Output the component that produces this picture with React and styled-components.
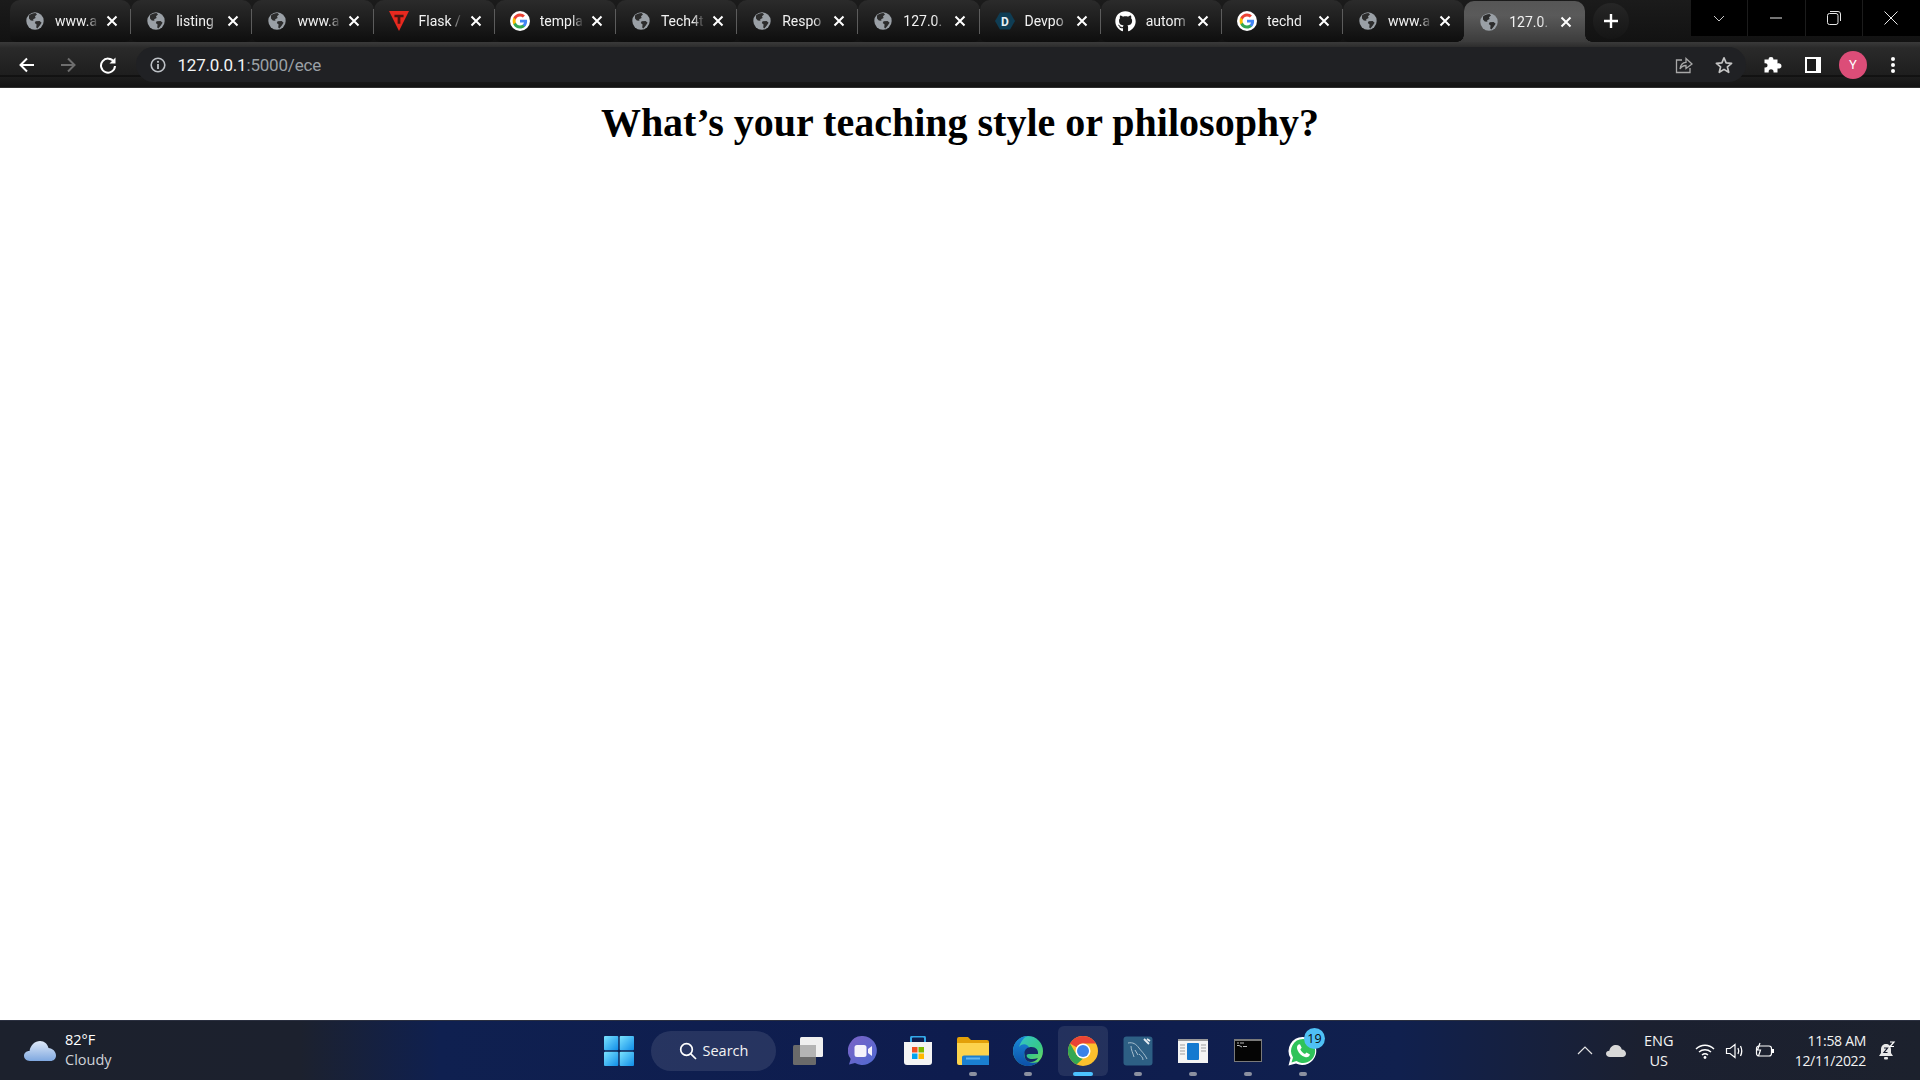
import React from 'react';
import styled, { createGlobalStyle } from 'styled-components';
import { FaGithub } from 'react-icons/fa';

const Global = createGlobalStyle`
  html, body { margin: 0; padding: 0; height: 100%; background: #fff; overflow: hidden; }
  #root { height: 100%; }
`;
const Screen = styled.div`
  width: 1920px; height: 1080px; display: flex; flex-direction: column;
  font-family: Roboto, "Open Sans", sans-serif;
`;

/* ---------- tab strip ---------- */
const Strip = styled.div`
  height: 42px; flex: none; display: flex; align-items: flex-start;
  padding-left: 10px;
  background: linear-gradient(#1b1b1b, #121212);
`;
const Tabs = styled.div`display: flex; height: 42px;`;
const Tab = styled.div`
  position: relative; box-sizing: border-box; width: ${p => p.$active ? 121 : 121.2}px;
  height: ${p => p.$active ? 41 : 42}px; margin-top: ${p => p.$active ? 1 : 0}px;
  display: flex; align-items: center; padding-left: 15px;
  border-radius: ${p => p.$active ? '10px 10px 0 0' : '10px 10px 6px 6px'};
  background: ${p => p.$active ? 'linear-gradient(#565656 0%, #5a5a5a 35%, #3c3c3c 100%)' : 'linear-gradient(#2b2b2b 0%, #1d1d1d 50%, #0e0e0e 100%)'};
  &::before {
    content: ''; display: ${p => p.$active ? 'block' : 'none'};
    position: absolute; left: -7px; bottom: 0; width: 7px; height: 7px;
    background: radial-gradient(circle at 0 0, transparent 6.5px, #3c3c3c 7px);
  }
  &::after {
    content: ''; display: ${p => p.$sep || p.$active ? 'block' : 'none'};
    position: absolute;
    ${p => p.$active
      ? 'right: -7px; bottom: 0; width: 7px; height: 7px; background: radial-gradient(circle at 100% 0, transparent 6.5px, #3c3c3c 7px);'
      : 'right: 0; top: 9px; width: 1px; height: 25px; background: #5c5c5c;'}
  }
`;
const Fav = styled.span`
  flex: none; width: 20px; height: 20px; display: flex; align-items: center; justify-content: center;
`;
const Title = styled.span`
  width: 44px; margin-left: 10px; flex: none; overflow: hidden; white-space: nowrap;
  font-size: 14px; color: #f1f1f1; line-height: 20px;
  -webkit-mask-image: linear-gradient(90deg, #000 72%, transparent 100%);
  mask-image: linear-gradient(90deg, #000 72%, transparent 100%);
`;
const Close = styled.span`
  flex: none; margin-left: 3px; width: 20px; height: 20px; display: flex; align-items: center; justify-content: center;
`;
const NewTab = styled.div`
  flex: none; margin: 3px 0 0 8px; width: 36px; height: 36px; border-radius: 50%;
  background: linear-gradient(#262626, #151515); display: flex; align-items: center; justify-content: center;
`;
const WindowControls = styled.div`
  margin-left: auto; display: flex; height: 36px; width: 229px; background: #000; flex: none;
`;
const WinBtn = styled.div`
  flex: 1; display: flex; align-items: center; justify-content: center;
  border-right: 1px solid ${p => p.$last ? 'transparent' : '#1c1c1c'};
`;

/* ---------- toolbar ---------- */
const Toolbar = styled.div`
  height: 46px; flex: none; display: flex; align-items: center; box-sizing: border-box;
  padding: 5px 7px 6px 7px;
  background: linear-gradient(#3a3a3a 0, #2a2a2a 6px, #1e1e1e 33px, #060606 34px, #1d1d1d 35px, #121212 46px);
  box-shadow: inset 0 -1px 0 #2e2e2e;
`;
const NavBtn = styled.div`
  width: ${p => p.$w || 40.5}px; height: 35px; flex: none; display: flex; align-items: center; justify-content: center;
`;
const Omnibox = styled.div`
  flex: 1; height: 35px; margin: 0 7px; display: flex; align-items: center; padding: 0 13px 0 14px;
  background: #202124; border-radius: 18px;
`;
const Url = styled.div`
  margin-left: 12px; font-size: 17px; color: #f1f3f4; letter-spacing: -0.2px;
  span { color: #9aa0a6; }
`;
const OmniRight = styled.div`margin-left: auto; display: flex; align-items: center; gap: 22px;`;
const Avatar = styled.div`
  width: 28px; height: 28px; border-radius: 50%; background: #dc4d78; color: #fff;
  display: flex; align-items: center; justify-content: center; font-size: 13px;
`;

/* ---------- page ---------- */
const Page = styled.main`flex: 1; background: #fff; min-height: 0;`;
const Heading = styled.h1`
  margin: 12px 0 0; text-align: center; color: #000;
  font: bold 40px/46px "Liberation Serif", "Times New Roman", serif;
`;

/* ---------- taskbar ---------- */
const Taskbar = styled.footer`
  height: 60px; flex: none; box-sizing: border-box; display: grid; grid-template-columns: 1fr auto 1fr; align-items: center;
  border-top: 1px solid #2b3040;
  background: linear-gradient(90deg, #1c212d 0, #1c212e 300px, #0f2050 440px, #0e1c4e 960px, #10204e 1400px, #1b2030 1640px, #1c212d 100%);
  font-family: "Open Sans", "Noto Sans", sans-serif;
`;
const Weather = styled.div`display: flex; align-items: center; padding-left: 24px; gap: 9px;`;
const TwoLine = styled.div`
  font-size: 14.5px; line-height: 20px; color: #fff; margin-top: -2px;
  small { display: block; font-size: 14.5px; color: #cfd2d8; }
`;
const Center = styled.div`display: flex; align-items: center; margin-left: 2px;`;
const Slot = styled.div`
  position: relative; width: 55px; height: 50px; display: flex; align-items: center; justify-content: center; flex: none;
`;
const Highlight = styled.div`
  position: absolute; left: 2.5px; right: 2.5px; top: 0; bottom: 0; border-radius: 6px;
  background: rgba(255,255,255,.09);
`;
const Dot = styled.i`
  position: absolute; left: 50%; bottom: 0; transform: translateX(-50%);
  width: ${p => p.$active ? 20 : 8}px; height: 4px; border-radius: 2px;
  background: ${p => p.$active ? '#4cc2ff' : '#8b90a0'};
`;
const IconWrap = styled.span`position: relative; display: flex;`;
const Badge = styled.span`
  position: absolute; top: -8px; right: -7px; width: 21px; height: 21px; border-radius: 50%;
  background: #4fc1f5; color: #0b0b0b; font-size: 12.5px; line-height: 21px; text-align: center;
`;
const SearchPill = styled.div`
  flex: none; width: 125px; height: 40px; margin: 0 4.5px; border-radius: 20px; box-sizing: border-box;
  background: rgba(255,255,255,.1); display: flex; align-items: center; justify-content: center; gap: 6px;
  color: #f3f3f3; font-size: 14.5px;
`;
const Tray = styled.div`display: flex; align-items: center; justify-content: flex-end; color: #fff; padding-right: 24px;`;
const TrayIcon = styled.span`display: flex; flex: none; margin-left: ${p => p.$ml || 0}px;`;
const Lang = styled.div`
  margin-left: 15px; width: 36px; text-align: center; font-size: 14.5px; line-height: 20px; color: #f3f3f3;
`;
const Clock = styled.div`
  margin-left: 20px; text-align: right; font-size: 14px; letter-spacing: -0.3px; line-height: 20px; color: #f3f3f3; white-space: nowrap;
`;

/* ---------- drawings ---------- */
const Globe = () => (
  <svg width="18" height="18" viewBox="0 0 18 18">
    <circle cx="9" cy="9" r="8.7" fill="#9aa0a6" />
    <path d="M3 3.6 C4.5 2 7 1 9.5 1 L11 2.6 L9 4.2 L9.6 6 L7.2 7.2 L7.4 8.8 L4.8 8.6 L3 6.6 Z" fill="#2c2c2c" />
    <path d="M9.6 9.2 L13.6 9 L15.6 10.8 L13.8 13.6 L11.4 16.4 L10.2 15.6 L10.6 12.4 L8.8 11 Z" fill="#2c2c2c" />
  </svg>
);
const GoogleG = () => (
  <svg width="20" height="20" viewBox="0 0 48 48">
    <circle cx="24" cy="24" r="24" fill="#fff" />
    <path fill="#4285F4" d="M41 24.5c0-1.300-.1-2.500-.3-3.700H24v7h9.600c-.4 2.200-1.700 4.100-3.500 5.300v4.500h5.700C39.100 34.500 41 30 41 24.500z" />
    <path fill="#34A853" d="M24 42c4.800 0 8.800-1.600 11.800-4.300l-5.700-4.500c-1.600 1.100-3.600 1.700-6.100 1.700-4.600 0-8.500-3.100-9.900-7.300H8.200v4.600C11.100 37.900 17 42 24 42z" />
    <path fill="#FBBC05" d="M14.100 27.600c-.4-1.100-.6-2.300-.6-3.600s.2-2.500.6-3.600v-4.600H8.200C7 18.200 6.300 21 6.300 24s.7 5.800 1.900 8.200l5.900-4.600z" />
    <path fill="#EA4335" d="M24 13.100c2.600 0 5 .9 6.800 2.700l5.100-5.100C32.800 7.800 28.800 6 24 6 17 6 11.100 10.100 8.200 15.800l5.900 4.600c1.400-4.200 5.300-7.300 9.900-7.300z" />
  </svg>
);
const FlaskLogo = () => (
  <svg width="22" height="22" viewBox="0 0 22 22">
    <path d="M0 0 H22 L11 22 Z" fill="#e7291f" />
    <path d="M6 4 H16 V7 H12.500 V14 H9.500 V7 H6 Z" fill="#4a1510" />
  </svg>
);
const DevLogo = () => (
  <svg width="20" height="20" viewBox="0 0 20 20">
    <path d="M5 1.500 H15 L20 10 L15 18.500 H5 L0 10 Z" fill="#0f3d54" />
    <text x="10" y="14.500" textAnchor="middle" fontSize="12" fontWeight="700" fontFamily="Roboto, sans-serif" fill="#e8f0f4">D</text>
  </svg>
);
const X = () => (
  <svg width="12" height="12" viewBox="0 0 12 12"><path d="M1.500 1.500 L10.500 10.500 M10.500 1.500 L1.500 10.500" stroke="#fff" strokeWidth="2" /></svg>
);
const favs = {
  globe: <Globe />, g: <GoogleG />, flask: <FlaskLogo />, dev: <DevLogo />,
  gh: <span style={{ display: 'flex', color: '#fff' }}><FaGithub size={21} /></span>,
};
const tabs = [
  ['globe', 'www.a'], ['globe', 'listing'], ['globe', 'www.a'], ['flask', 'Flask /'], ['g', 'templa'],
  ['globe', 'Tech4t'], ['globe', 'Respo'], ['globe', '127.0.'], ['dev', 'Devpo'], ['gh', 'autom'],
  ['g', 'techd'], ['globe', 'www.a'], ['globe', '127.0.'],
];

const Sv = ({ s = 20, children, v }) => <svg width={s} height={s} viewBox={v || `0 0 ${s} ${s}`} fill="none">{children}</svg>;

const Back = ({ c = '#fff' }) => <Sv s={18}><path d="M16 9 H2.500 M9 2.500 L2.500 9 L9 15.500" stroke={c} strokeWidth="2" /></Sv>;
const Fwd = () => <Sv s={18}><path d="M2 9 H15.500 M9 2.500 L15.500 9 L9 15.500" stroke="#6e6e6e" strokeWidth="2" /></Sv>;
const Reload = () => <Sv s={18}><path d="M15 6 A7 7 0 1 0 16 10" stroke="#fff" strokeWidth="2" /><path d="M16.500 1.500 V7.500 H10.500 Z" fill="#fff" /></Sv>;
const Info = () => <Sv s={16}><circle cx="8" cy="8" r="6.800" stroke="#bdc1c6" strokeWidth="1.600" /><path d="M8 7 V12" stroke="#bdc1c6" strokeWidth="1.800" /><circle cx="8" cy="4.800" r="1.100" fill="#bdc1c6" /></Sv>;
const Share = () => <Sv s={18}><path d="M7 4 H1.500 V16.500 H15 V12" stroke="#a8a8a8" strokeWidth="1.300" /><path d="M5 13 C5.500 8.500 8 6.500 11 6.300 V2.500 L17 8 L11 12.500 V9.500 C8.500 9.500 6.500 10.500 5 13 Z" stroke="#a8a8a8" strokeWidth="1.300" /></Sv>;
const Star = () => <Sv s={18}><path d="M9 1.800 L11.100 6.900 L16.600 7.300 L12.400 10.900 L13.700 16.300 L9 13.400 L4.300 16.300 L5.600 10.900 L1.400 7.300 L6.900 6.900 Z" stroke="#c4c4c4" strokeWidth="1.700" strokeLinejoin="round" /></Sv>;
const Puzzle = () => <Sv s={18}><path d="M7 1 C9 1 9.500 2 9.300 3.500 H13.500 V7.500 C15.500 7 17.500 7.800 17.500 10 C17.500 12 15.500 12.800 13.500 12.500 V16.500 H9.500 C9.800 14.500 9 13.300 7 13.300 C5 13.300 4.500 14.800 4.700 16.500 H.5 V11.500 C2.500 11.800 3.500 11 3.500 9.300 C3.500 7.800 2.500 7 .5 7.300 V3.500 H4.700 C4.500 2 5 1 7 1 Z" fill="#fff" /></Sv>;
const SidePanel = () => <Sv s={18}><rect x="1" y="1" width="16" height="16" fill="#fff" /><rect x="3" y="3" width="9" height="12" fill="#1c1c1c" /></Sv>;
const Dots = () => <Sv s={18}><circle cx="9" cy="3" r="2" fill="#fff" /><circle cx="9" cy="9" r="2" fill="#fff" /><circle cx="9" cy="15" r="2" fill="#fff" /></Sv>;

const Cloud = () => (
  <svg width="32" height="22" viewBox="0 0 32 22">
    <defs><linearGradient id="cl" x1="0" y1="0" x2="0" y2="1"><stop offset="0" stopColor="#dfe9f8" /><stop offset="1" stopColor="#7fa8e0" /></linearGradient></defs>
    <path d="M6 21 C2 21 0 18.500 0 15.800 C0 13 2.500 10.800 5.500 11 C6.500 5 11 1 16 1 C20.500 1 23.500 4 24.500 8 C28.500 8.300 32 11.500 32 15.500 C32 18.800 29.500 21 26.500 21 Z" fill="url(#cl)" />
  </svg>
);
const WinLogo = () => (
  <svg width="30" height="30" viewBox="0 0 30 30">
    <defs><linearGradient id="wl" x1="0" y1="0" x2="1" y2="1"><stop offset="0" stopColor="#7be3ff" /><stop offset="1" stopColor="#0f8de8" /></linearGradient></defs>
    <rect width="14.300" height="14.300" rx="1" fill="url(#wl)" /><rect x="15.700" width="14.300" height="14.300" rx="1" fill="url(#wl)" />
    <rect y="15.700" width="14.300" height="14.300" rx="1" fill="url(#wl)" /><rect x="15.700" y="15.700" width="14.300" height="14.300" rx="1" fill="url(#wl)" />
  </svg>
);
const TaskView = () => (
  <svg width="30" height="28" viewBox="0 0 30 28">
    <rect x="0" y="8" width="23" height="20" rx="1.500" fill="#6a6a6a" />
    <rect x="7" y="0" width="23" height="20" rx="1.500" fill="#f0f0f0" />
    <rect x="7" y="8" width="16" height="12" fill="#b4b4b4" />
  </svg>
);
const Chat = () => (
  <svg width="30" height="30" viewBox="0 0 30 30">
    <defs><linearGradient id="ch" x1="0" y1="0" x2="1" y2="1"><stop offset="0" stopColor="#7b62c6" /><stop offset="1" stopColor="#4f6ad2" /></linearGradient></defs>
    <path d="M15 0 A14.500 14.500 0 1 1 7 27 L1 28.500 L2.700 23 A14.500 14.500 0 0 1 15 0 Z" fill="url(#ch)" />
    <rect x="6.500" y="9" width="12" height="12" rx="2.500" fill="#f4f2fb" /><path d="M20 13 L24 10 V20 L20 17 Z" fill="#f4f2fb" />
  </svg>
);
const Store = () => (
  <svg width="30" height="30" viewBox="0 0 30 30">
    <path d="M8 6 V2 Q8 .5 10 .5 H20 Q22 .5 22 2 V6" stroke="#33a8e8" strokeWidth="2" fill="none" />
    <path d="M1 6 H29 V26 Q29 29 26 29 H4 Q1 29 1 26 Z" fill="#f4f4f4" />
    <rect x="9" y="11" width="5.500" height="5.500" fill="#f25022" /><rect x="15.500" y="11" width="5.500" height="5.500" fill="#7fba00" />
    <rect x="9" y="17.500" width="5.500" height="5.500" fill="#00a4ef" /><rect x="15.500" y="17.500" width="5.500" height="5.500" fill="#ffb900" />
  </svg>
);
const Folder = () => (
  <svg width="32" height="28" viewBox="0 0 32 28">
    <path d="M0 2 Q0 0 2 0 H11 L14 3 H30 Q32 3 32 5 V12 H0 Z" fill="#e3a008" />
    <path d="M0 6 H32 V26 Q32 28 30 28 H2 Q0 28 0 26 Z" fill="#fcd34d" />
    <path d="M5 20 Q5 18.500 7 18.500 H32 V28 H5 Z" fill="#1a7fd0" /><rect x="9" y="20.500" width="14" height="2" fill="#62b6f0" />
  </svg>
);
const Edge = () => (
  <svg width="30" height="30" viewBox="0 0 30 30">
    <defs>
      <linearGradient id="e1" x1="0" y1="0" x2="1" y2="1"><stop offset="0" stopColor="#36c4d8" /><stop offset=".6" stopColor="#36c88a" /><stop offset="1" stopColor="#7ee052" /></linearGradient>
      <linearGradient id="e2" x1="0" y1="0" x2="0" y2="1"><stop offset="0" stopColor="#1a8ad8" /><stop offset="1" stopColor="#0c4fa8" /></linearGradient>
    </defs>
    <circle cx="15" cy="15" r="15" fill="url(#e1)" />
    <path d="M15 0 C7 0 0 6.500 0 15 C0 23 6.500 30 15 30 C19 30 22.500 28.500 25 26 C20 28 13 26 11.500 21 C10.500 17.500 13 14.500 17 13 C14 6 8 8 6 11 C8 5 11 1 15 0 Z" fill="url(#e2)" />
    <path d="M11.500 17 C11.500 13 15 11 18.500 11 C23 11 25.500 14 25 18 L16 18 C14 18 13 19 14 21 C15 23 20 24 25 22 C22 27 14 27.500 12 22 C11.700 21 11.500 19 11.500 17 Z" fill="#142a6a" />
  </svg>
);
const Chrome = () => (
  <svg width="30" height="30" viewBox="0 0 30 30">
    <circle cx="15" cy="15" r="15" fill="#fbc02d" />
    <path d="M15 0 A15 15 0 0 1 28 7.500 H15 A7.500 7.500 0 0 0 8.500 11.200 L2 7.500 A15 15 0 0 1 15 0 Z" fill="#ea4335" />
    <path d="M2 7.500 L8.500 18.800 A7.500 7.500 0 0 0 15 22.500 L8.500 28.500 A15 15 0 0 1 2 7.500 Z" fill="#34a853" />
    <circle cx="15" cy="15" r="7.500" fill="#fff" /><circle cx="15" cy="15" r="6" fill="#3b82e8" />
  </svg>
);
const Mysql = () => (
  <svg width="30" height="30" viewBox="0 0 30 30">
    <rect width="29" height="29" x=".5" y=".5" rx="3" fill="#2d5f84" />
    <path d="M5 7 C10 6 13 8 16 12 C18 15 21 17 24 23 M8 10 C8 14 10 17 11 21 M12 14 L15 19 M16 18 C18 20 20 21 20 24" stroke="#b4c8d6" strokeWidth=".9" fill="none" />
    <path d="M21 3 L26 8 M24 3 L27 5" stroke="#e6edf2" strokeWidth="1.800" />
  </svg>
);
const AppWindow = () => (
  <svg width="30" height="24" viewBox="0 0 30 24">
    <rect width="30" height="24" fill="#f4f4f4" /><rect y="0" width="30" height="2" fill="#9a9a9a" />
    <rect x="9" y="4" width="12" height="17" rx="1" fill="#1479d0" />
    <path d="M2 6 H7 M2 9 H7 M2 12 H7 M2 15 H7 M23 6 H28 M23 9 H28 M23 12 H28" stroke="#9f9f9f" strokeWidth="1" />
  </svg>
);
const Cmd = () => (
  <svg width="28" height="23" viewBox="0 0 28 23">
    <rect width="28" height="23" fill="#7a7a7a" /><rect x="1" y="2" width="26" height="20" fill="#050505" />
    <path d="M3 4 H5 M6 4 H10 M3 6.500 H5 L8 8 M9 7.500 H13" stroke="#cfcfcf" strokeWidth=".9" />
  </svg>
);
const Whats = () => (
  <svg width="30" height="30" viewBox="0 0 30 30">
    <path d="M15 1 A14 14 0 1 1 8 27.500 L.5 29.500 L2.500 22 A14 14 0 0 1 15 1 Z" fill="#fff" />
    <path d="M15 3 A12 12 0 1 1 8.500 25 L3.500 26.500 L5 21.500 A12 12 0 0 1 15 3 Z" fill="#2fc35a" />
    <path d="M10.500 8.500 C9 9.500 8.500 11.500 9.500 14 C11 17.500 13.500 20 17 21 C19.500 21.800 21.500 20.500 22 18.500 L18.500 16.500 L17 18 C15 17.300 13 15.300 12.300 13.300 L13.700 11.800 L12 8.300 Z" fill="#fff" />
  </svg>
);

export default function App() {
  return (
    <Screen>
      <Global />
      <Strip>
        <Tabs>
          {tabs.map(([f, t], i) => (
            <Tab key={i} $active={i === 12} $sep={i < 11}>
              <Fav>{favs[f]}</Fav>
              <Title>{t}</Title>
              <Close><X /></Close>
            </Tab>
          ))}
        </Tabs>
        <NewTab><Sv s={16}><path d="M8 1 V15 M1 8 H15" stroke="#fff" strokeWidth="2.400" /></Sv></NewTab>
        <WindowControls>
          <WinBtn><Sv s={14}><path d="M2 5 L7 10 L12 5" stroke="#c8c8c8" strokeWidth="1" /></Sv></WinBtn>
          <WinBtn><Sv s={14}><path d="M1 7 H13" stroke="#e8e8e8" strokeWidth="1" /></Sv></WinBtn>
          <WinBtn><Sv s={14}><rect x=".5" y="2.500" width="10.500" height="11" rx="2" stroke="#e8e8e8" /><path d="M3 .5 H11 Q13.500 .5 13.500 3 V10" stroke="#e8e8e8" /></Sv></WinBtn>
          <WinBtn $last><Sv s={14}><path d="M.5 .5 L13.500 13.500 M13.500 .5 L.5 13.500" stroke="#e8e8e8" strokeWidth="1" /></Sv></WinBtn>
        </WindowControls>
      </Strip>
      <Toolbar>
        <NavBtn><Back /></NavBtn>
        <NavBtn><Fwd /></NavBtn>
        <NavBtn><Reload /></NavBtn>
        <Omnibox>
          <Info />
          <Url>127.0.0.1<span>:5000/ece</span></Url>
          <OmniRight><Share /><Star /></OmniRight>
        </Omnibox>
        <NavBtn $w={40}><Puzzle /></NavBtn>
        <NavBtn $w={40}><SidePanel /></NavBtn>
        <NavBtn $w={40}><Avatar>Y</Avatar></NavBtn>
        <NavBtn $w={40}><Dots /></NavBtn>
      </Toolbar>
      <Page><Heading>What’s your teaching style or philosophy?</Heading></Page>
      <Taskbar>
        <Weather>
          <Cloud />
          <TwoLine>82°F<small>Cloudy</small></TwoLine>
        </Weather>
        <Center>
          <Slot><WinLogo /></Slot>
          <SearchPill>
            <Sv s={18}><circle cx="7.500" cy="7.500" r="5.800" stroke="#fff" strokeWidth="1.700" /><path d="M11.800 11.800 L17 17" stroke="#fff" strokeWidth="1.700" /></Sv>
            Search
          </SearchPill>
          <Slot><TaskView /></Slot>
          <Slot><Chat /></Slot>
          <Slot><Store /></Slot>
          <Slot><Folder /><Dot /></Slot>
          <Slot><Edge /><Dot /></Slot>
          <Slot><Highlight /><IconWrap><Chrome /></IconWrap><Dot $active /></Slot>
          <Slot><Mysql /><Dot /></Slot>
          <Slot><AppWindow /><Dot /></Slot>
          <Slot><Cmd /><Dot /></Slot>
          <Slot><IconWrap><Whats /><Badge>19</Badge></IconWrap><Dot /></Slot>
        </Center>
        <Tray>
          <TrayIcon><Sv s={18}><path d="M2 12 L9 5 L16 12" stroke="#e4e4e4" strokeWidth="1.200" /></Sv></TrayIcon>
          <TrayIcon $ml={12}><Sv s={20} v="0 0 20 14"><path d="M4 13 C1.500 13 0 11.500 0 9.800 C0 8 1.500 6.800 3.300 6.800 C4 3 7 1 10 1 C13 1 15.300 3 15.800 5.500 C18 5.500 20 7.300 20 9.500 C20 11.500 18.500 13 16.500 13 Z" fill="#d8d8d8" /></Sv></TrayIcon>
          <Lang>ENG<br />US</Lang>
          <TrayIcon $ml={18}><Sv s={20}><path d="M1 8 C6 3 14 3 19 8 M4 11 C7.500 8 12.500 8 16 11 M7 14 C8.800 12.500 11.200 12.500 13 14" stroke="#fff" strokeWidth="1.400" /><circle cx="10" cy="16.500" r="1.400" fill="#fff" /></Sv></TrayIcon>
          <TrayIcon $ml={10}><Sv s={20}><path d="M1.500 7.500 H5 L10 3.500 V16.500 L5 12.500 H1.500 Z" stroke="#fff" strokeWidth="1.200" /><path d="M13 7 Q14.500 10 13 13 M15.500 5 Q18 10 15.500 15" stroke="#fff" strokeWidth="1.300" /></Sv></TrayIcon>
          <TrayIcon $ml={10}><Sv s={20}><rect x="1.500" y="5" width="15" height="10" rx="2.500" stroke="#fff" strokeWidth="1.200" /><rect x="17" y="8" width="2" height="4" fill="#fff" /><path d="M5 2 L2.500 9 H5.500 L3.500 15" stroke="#fff" strokeWidth="1.200" /></Sv></TrayIcon>
          <Clock>11:58 AM<br />12/11/2022</Clock>
          <TrayIcon $ml={10}><Sv s={20}><path d="M10 3 C6.500 3 5 5.500 5 8.500 V12 L3 15 H17 L15 12 V8.500 C15 5.500 13.500 3 10 3 Z" fill="#e8e8e8" /><rect x="8" y="16" width="4" height="2.500" rx="1" fill="#e8e8e8" /><path d="M8 7 H11.500 L8 11.500 H11.500" stroke="#14192a" strokeWidth="1.200" /><path d="M14 1 H18 L14 5.500 H18" stroke="#fff" strokeWidth="1.200" /></Sv></TrayIcon>
        </Tray>
      </Taskbar>
    </Screen>
  );
}
